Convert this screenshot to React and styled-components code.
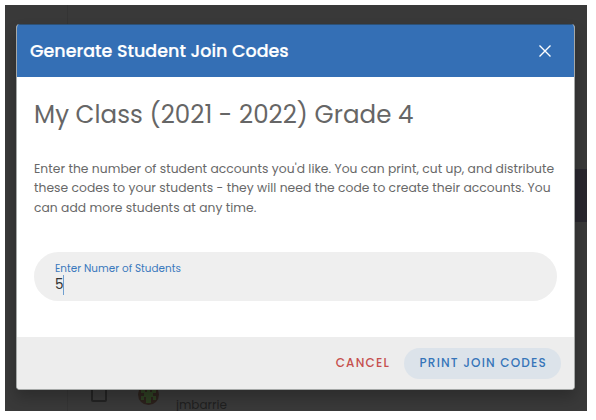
import styled, { createGlobalStyle } from 'styled-components'

const GlobalStyle = createGlobalStyle`
  * {
    box-sizing: border-box;
  }

  body {
    margin: 0;
    background: #fff;
    font-family: Poppins, Inter, 'Open Sans', sans-serif;
    font-feature-settings: 'cv11';
  }
`

const Screen = styled.div`
  position: relative;
  display: flex;
  width: 582px;
  height: 406px;
  margin: 5px;
  overflow: hidden;
  background: #393939;
`

const Rail = styled.div`
  width: 63px;
  border-right: 1px solid #343434;
`

const Page = styled.div`
  display: flex;
  flex: 1;
  flex-direction: column;
`

const Banner = styled.div`
  flex: none;
  height: 53px;
  margin-top: 164px;
  background: #29272e;
`

const StudentRow = styled.div`
  display: flex;
  flex: none;
  height: 29px;
  margin-top: 160px;
  padding-left: 23px;
`

const Checkbox = styled.div`
  width: 16px;
  height: 16px;
  margin-top: 4px;
  border: 2px solid #232323;
  border-radius: 2px;
`

const Avatar = styled.svg`
  width: 21px;
  height: 21px;
  margin: 2px 17px 0 31px;
`

const Username = styled.div`
  margin-top: 17px;
  color: #202020;
  font-size: 12px;
  line-height: 12px;
`

const Dialog = styled.div`
  position: absolute;
  top: 19px;
  left: 11px;
  display: flex;
  flex-direction: column;
  width: 559px;
  height: 366px;
  overflow: hidden;
  border: 1px solid #a5a8a7;
  border-width: 0 1px 1px;
  border-radius: 4px;
  background: #fff;
`

const DialogShadow = styled.div`
  position: absolute;
  top: 19px;
  left: 11px;
  width: 559px;
  height: 366px;
  border-radius: 4px;
  box-shadow: 0 8px 14px rgba(0, 0, 0, 0.22);
`

const DialogHeader = styled.div`
  display: flex;
  align-items: center;
  justify-content: space-between;
  flex: none;
  height: 53px;
  margin: 0 -1px;
  padding: 0 23px 0 14px;
  border-top: 1px solid #2d5176;
  background: #346fb5;
  color: #fff;
`

const Line = styled.span`
  display: block;
  width: max-content;
  white-space: nowrap;
  letter-spacing: ${({ $spacing }) => $spacing || 0}px;
`

const Title = styled.div`
  font-size: 17.5px;
  font-weight: 500;
  line-height: 24px;
  -webkit-text-stroke: 0.2px #fff;
`

const CloseIcon = styled.svg`
  width: 14px;
  height: 14px;
`

const DialogBody = styled.div`
  flex: 1;
  padding: 22px 17px 0;
`

const ClassName = styled.div`
  color: #666;
  font-size: 24.5px;
  font-weight: 400;
  line-height: 32px;
`

const Description = styled.div`
  margin-top: 28px;
  color: #686868;
  font-size: 12.3px;
  line-height: 19.4px;
`

const Field = styled.div`
  height: 49px;
  margin-top: 35px;
  padding: 10px 21px 0;
  border-radius: 25px;
  background: #efefef;
`

const Label = styled.div`
  color: #3a79bd;
  font-size: 10.4px;
  line-height: 14px;
`

const Value = styled.div`
  display: flex;
  align-items: center;
  height: 20px;
  margin-top: -1px;
  color: #333;
  font-size: 13.5px;
  line-height: 20px;
`

const Caret = styled.div`
  width: 1px;
  height: 20px;
  background: #6f9fd0;
`

const DialogFooter = styled.div`
  display: flex;
  align-items: center;
  justify-content: flex-end;
  flex: none;
  height: 52px;
  padding: 0 13px 0 0;
  background: #ededed;
`

const Button = styled.div`
  display: flex;
  align-items: center;
  height: 31px;
  padding: 0 14px 0 15.5px;
  border-radius: 16px;
  background: ${({ $filled }) => ($filled ? '#dce3ea' : 'transparent')};
  color: ${({ $danger }) => ($danger ? '#c6504e' : '#3675b9')};
  font-size: 12px;
  font-weight: 500;
`

const App = () => {
  return (
    <>
      <GlobalStyle />
      <Screen>
        <Rail />
        <Page>
          <Banner />
          <StudentRow>
            <Checkbox />
            <Avatar viewBox="0 0 21 21">
              <circle cx="10.5" cy="10.5" r="10.5" fill="#2b211c" />
              <path
                d="M3 5h4v3h2V5h3v3h2V5h4v4h-3v3h3v4h-3v-3h-2v6H8v-6H6v3H3v-4h3V9H3z"
                fill="#2d3f22"
              />
            </Avatar>
            <Username>
              <Line $spacing={0}>jmbarrie</Line>
            </Username>
          </StudentRow>
        </Page>
        <DialogShadow />
        <Dialog>
          <DialogHeader>
            <Title>
              <Line $spacing={0}>Generate Student Join Codes</Line>
            </Title>
            <CloseIcon viewBox="0 0 14 14" stroke="#fff" strokeWidth="1.4">
              <path d="M1.5 1.5l11 11M12.5 1.5l-11 11" />
            </CloseIcon>
          </DialogHeader>
          <DialogBody>
            <ClassName>
              <Line $spacing={0.05}>My Class (2021 - 2022) Grade 4</Line>
            </ClassName>
            <Description>
              <Line $spacing={0.045}>
                Enter the number of student accounts you'd like. You can print, cut up, and distribute
              </Line>
              <Line $spacing={0.045}>
                these codes to your students - they will need the code to create their accounts. You
              </Line>
              <Line $spacing={0.045}>can add more students at any time.</Line>
            </Description>
            <Field>
              <Label>
                <Line $spacing={0.03}>Enter Numer of Students</Line>
              </Label>
              <Value>
                5<Caret />
              </Value>
            </Field>
          </DialogBody>
          <DialogFooter>
            <Button $danger>
              <Line $spacing={1.2}>CANCEL</Line>
            </Button>
            <Button $filled>
              <Line $spacing={1.2}>PRINT JOIN CODES</Line>
            </Button>
          </DialogFooter>
        </Dialog>
      </Screen>
    </>
  )
}

export default App
